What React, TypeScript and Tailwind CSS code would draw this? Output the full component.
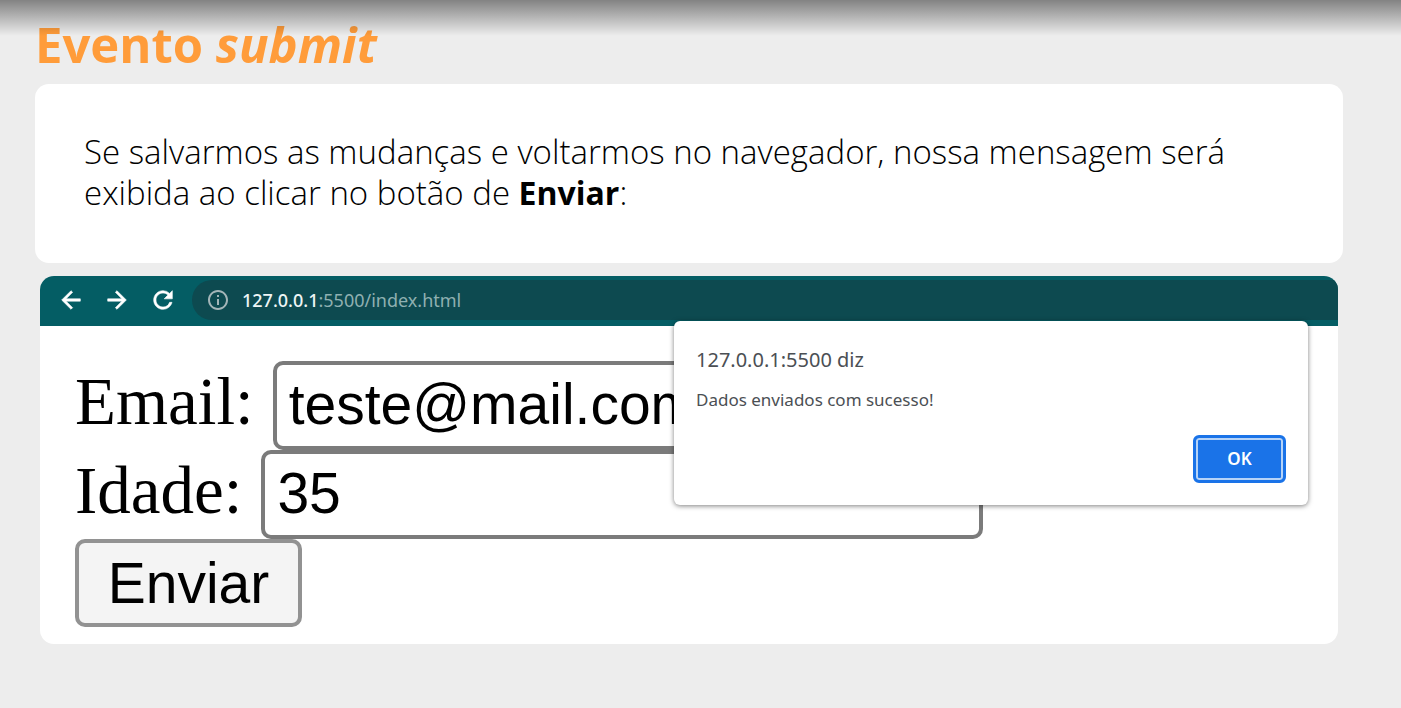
import React from "react";
import { MdInfoOutline } from "react-icons/md";

const navIcons = [
  {
    label: "Voltar",
    path: "M20 11H7.83l5.59-5.59L12 4l-8 8 8 8 1.41-1.41L7.83 13H20v-2z",
  },
  {
    label: "Avançar",
    path: "M4 11h12.17l-5.59-5.59L12 4l8 8-8 8-1.41-1.41L16.17 13H4v-2z",
  },
  {
    label: "Recarregar",
    path: "M17.65 6.35A7.958 7.958 0 0 0 12 4c-4.42 0-7.99 3.58-7.99 8s3.57 8 7.99 8c3.73 0 6.84-2.55 7.73-6h-2.08A5.99 5.99 0 0 1 12 18c-3.31 0-6-2.69-6-6s2.69-6 6-6c1.66 0 3.14.69 4.22 1.78L13 11h7V4l-2.35 2.35z",
  },
];

function AddressBar() {
  return (
    <div className="flex h-[50px] items-center bg-[#045d64]">
      <nav className="mb-[2px] flex w-[152px] shrink-0 items-center gap-[18px] pl-[17px] text-white">
        {navIcons.map((icon) => (
          <button key={icon.label} type="button" aria-label={icon.label}>
            <svg
              viewBox="0 0 24 24"
              className="block size-7"
              fill="currentColor"
              stroke="currentColor"
              strokeWidth="0.5"
              aria-hidden="true"
            >
              <path d={icon.path} />
            </svg>
          </button>
        ))}
      </nav>
      <div className="mb-[2px] flex h-10 flex-1 items-center gap-3 rounded-l-full bg-[#0d4a50] pl-[14px] font-['Noto_Sans','Open_Sans',sans-serif] text-[18px] text-[#8fb0b1]">
        <MdInfoOutline size={24} className="text-[#a3b5b8]" />
        <p>
          <span className="font-medium text-[#eef5f5]">127.0.0.1</span>:5500/index.html
        </p>
      </div>
    </div>
  );
}

function Field({ id, label, type, value }: { id: string; label: string; type: string; value: string }) {
  return (
    <div className="flex items-center gap-[19px]">
      <label htmlFor={id} className="pb-[10px] text-[67px] leading-[76px]">
        {label}
      </label>
      <input
        id={id}
        type={type}
        defaultValue={value}
        className="h-[89px] w-[722px] min-w-0 rounded-[10px] border-4 border-[#7b7b7b] bg-white px-3 pb-1 font-['Liberation_Sans',sans-serif] text-[57px] outline-none"
      />
    </div>
  );
}

function AlertDialog() {
  return (
    <div
      role="alertdialog"
      aria-labelledby="alert-title"
      aria-describedby="alert-text"
      className="absolute top-[45px] right-[30px] flex w-[634px] flex-col rounded-md bg-white px-[22px] pt-6 pb-[22px] font-['Noto_Sans','Open_Sans',sans-serif] text-[#4b4f54] shadow-[0_1px_5px_rgba(0,0,0,0.5)]"
    >
      <h2 id="alert-title" className="text-[20px] leading-[30px]">
        127.0.0.1:5500 diz
      </h2>
      <p id="alert-text" className="mt-3 text-[17px] leading-[26px]">
        Dados enviados com sucesso!
      </p>
      <button
        type="button"
        className="mt-[22px] h-12 w-[93px] self-end rounded-md border-[3px] border-[#1a73e8] bg-[#1a73e8] text-[17px] font-semibold text-white inset-ring-2 inset-ring-[#b5d3f8]"
      >
        OK
      </button>
    </div>
  );
}

export default function App() {
  return (
    <main className="relative min-h-screen bg-[#ededed] pt-[14px] pr-[58px] pb-16 pl-[35px] font-['Open_Sans',sans-serif]">
      <h1 className="text-[49px] leading-[60px] font-bold text-[#ff9c3a]">
        Evento <em>submit</em>
      </h1>
      <section className="mt-[10px] rounded-[14px] bg-white px-[49px] pt-[47px] pb-[50px] text-[33px] leading-[41px] font-light text-black">
        <p>
          Se salvarmos as mudanças e voltarmos no navegador, nossa mensagem será exibida ao clicar no botão de{" "}
          <strong className="text-[32px] font-bold">Enviar</strong>:
        </p>
      </section>
      <section className="relative mx-[5px] mt-[13px] overflow-hidden rounded-[14px] bg-white">
        <AddressBar />
        <form
          className="px-[35px] pt-[35px] pb-[17px] font-['Liberation_Serif',serif] text-black"
          onSubmit={(event) => event.preventDefault()}
        >
          <Field id="email" label="Email:" type="email" value="teste@mail.com" />
          <Field id="idade" label="Idade:" type="text" value="35" />
          <button
            type="submit"
            className="block h-[88px] w-[227px] rounded-[10px] border-4 border-[#929292] bg-[#f4f4f4] font-['Liberation_Sans',sans-serif] text-[57px] leading-[80px]"
          >
            Enviar
          </button>
        </form>
        <AlertDialog />
      </section>
      <div className="pointer-events-none absolute inset-x-0 top-0 h-9 bg-linear-to-b from-black/45 to-transparent" />
    </main>
  );
}
